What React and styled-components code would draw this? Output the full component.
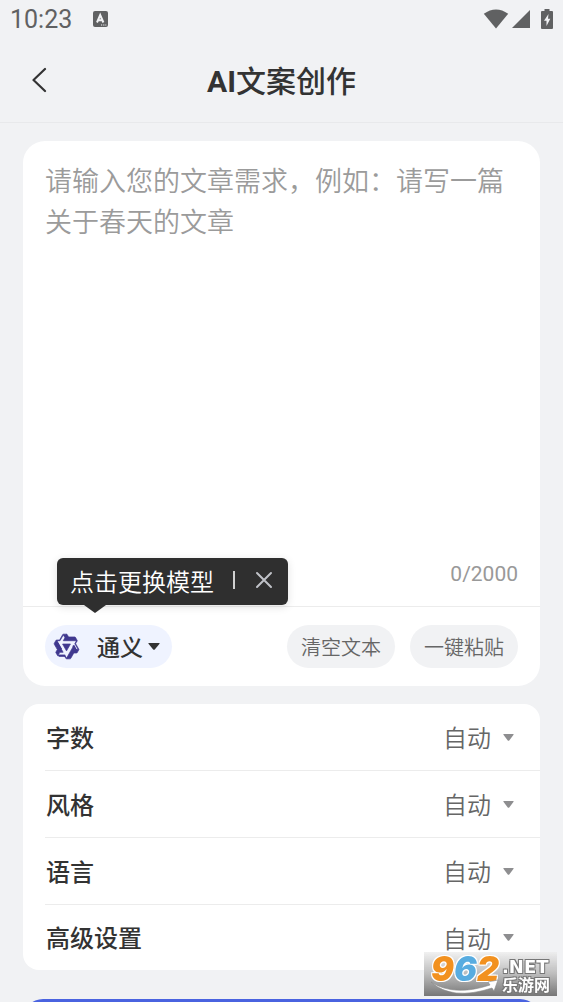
import React, { useState } from "react";
import styled, { createGlobalStyle } from "styled-components";

const GlobalStyle = createGlobalStyle`
  * {
    box-sizing: border-box;
  }
  body {
    margin: 0;
    background: #f1f2f4;
    color: #333333;
    font-family: Roboto, "Noto Sans CJK SC", sans-serif;
  }
  button, select, textarea {
    margin: 0;
    padding: 0;
    border: 0;
    background: none;
    color: inherit;
    font: inherit;
  }
`;

const Page = styled.div`
  display: flex;
  flex-direction: column;
  height: 100vh;
  overflow: hidden;
`;

const StatusBar = styled.div`
  display: flex;
  align-items: center;
  flex-shrink: 0;
  height: 38px;
  padding: 0 10px;
  color: #606162;
`;

const Clock = styled.span`
  margin-right: 21px;
  padding-top: 2px;
  font-size: 25px;
  line-height: 38px;
`;

const StatusIcons = styled.div`
  display: flex;
  align-items: center;
  margin-left: auto;
`;

const Signal = styled.svg`
  margin: 0 11px 0 3px;
`;

const Header = styled.header`
  display: grid;
  grid-template-columns: 48px 1fr 48px;
  align-items: center;
  flex-shrink: 0;
  height: 85px;
  padding: 0 16px;
  border-bottom: 1px solid #e8e9eb;
`;

const BackButton = styled.button`
  display: flex;
  align-items: center;
  justify-content: center;
  height: 48px;
`;

const Title = styled.h1`
  margin: 0;
  padding-bottom: 2px;
  font-size: 30px;
  font-weight: 500;
  text-align: center;
  strong {
    font-weight: 700;
  }
`;

const Main = styled.main`
  display: flex;
  flex-direction: column;
  flex: 1;
  gap: 18px;
  min-height: 0;
  padding: 18px 23px;
  overflow-y: auto;
  scrollbar-width: none;
`;

const Card = styled.section`
  flex-shrink: 0;
  border-radius: ${(props) => props.$radius};
  background: #ffffff;
`;

const Prompt = styled.textarea`
  display: block;
  width: 100%;
  padding: 21px 22px 31px;
  outline: none;
  resize: none;
  font-size: 27px;
  font-weight: 350;
  line-height: 41px;
  scrollbar-width: none;
  &::placeholder {
    color: #9b9b9b;
    opacity: 1;
  }
`;

const Counter = styled.div`
  padding: 0 22px 19px;
  color: #999999;
  font-size: 21px;
  line-height: 25px;
  text-align: right;
`;

const Toolbar = styled.div`
  display: flex;
  align-items: center;
  gap: 15px;
  height: 80px;
  padding: 0 22px;
  border-top: 1px solid #ececec;
`;

const ModelPicker = styled.div`
  position: relative;
  margin-right: auto;
`;

const ModelPill = styled.label`
  display: flex;
  align-items: center;
  height: 43px;
  padding: 0 12px 0 8px;
  border-radius: 22px;
  background: #eff3ff;
`;

const ModelSelect = styled.select`
  margin: 0 5px 0 17px;
  padding-top: 4px;
  appearance: none;
  outline: none;
  font-size: 23px;
  font-weight: 500;
`;

const Tooltip = styled.div`
  position: absolute;
  bottom: calc(100% + 20px);
  left: 12px;
  display: flex;
  align-items: center;
  height: 47px;
  padding: 0 15px 3px 13px;
  border-radius: 6px;
  background: #2f2f2f;
  box-shadow: 0 2px 8px rgba(0, 0, 0, 0.12);
  color: #ffffff;
  font-size: 24px;
  font-weight: 350;
  white-space: nowrap;
  &::after {
    content: "";
    position: absolute;
    top: 100%;
    left: 27px;
    border: 11px solid transparent;
    border-top: 8px solid #2f2f2f;
    border-bottom: 0;
  }
`;

const TooltipLine = styled.span`
  width: 2px;
  height: 18px;
  margin: 0 20px 0 19px;
  background: #d0d0d0;
`;

const CloseButton = styled.button`
  display: flex;
`;

const PillButton = styled.button`
  height: 43px;
  padding: 0 14px;
  border-radius: 22px;
  background: #f1f2f4;
  color: #666666;
  font-size: 20px;
  font-weight: 350;
  white-space: nowrap;
`;

const Option = styled.div`
  display: flex;
  align-items: center;
  height: 67px;
  margin-left: 22px;
  padding-right: 26px;
  border-bottom: 1px solid #ececec;
  &:last-child {
    height: 65px;
    border-bottom: 0;
  }
`;

const OptionLabel = styled.label`
  flex: 1;
  padding: 0 0 2px 1px;
  font-size: 24px;
  font-weight: 500;
`;

const OptionSelect = styled.select`
  margin-right: 12px;
  padding-top: 4px;
  appearance: none;
  outline: none;
  color: #666666;
  font-size: 24px;
  font-weight: 350;
`;

const SubmitButton = styled.button`
  flex-shrink: 0;
  height: 66px;
  margin-top: 11px;
  border-radius: 20px;
  background: #4a63e0;
`;

const Watermark = styled.div`
  position: fixed;
  right: 6px;
  bottom: 6px;
  display: flex;
  width: 133px;
  height: 44px;
  padding: 1px 0 0 7px;
  background: linear-gradient(rgba(235, 235, 235, 0.7), #bcbcbc 50%, #777777);
  font-family: "DejaVu Sans", "Noto Sans CJK SC", sans-serif;
  font-weight: 700;
  pointer-events: none;
`;

const Swoosh = styled.svg`
  position: absolute;
  left: 0;
  bottom: 0;
`;

const Digit = styled.span`
  width: 23px;
  color: ${(props) => props.$color};
  font-family: Inter, sans-serif;
  font-size: 34px;
  font-style: italic;
  font-weight: 900;
  line-height: 32px;
  text-shadow: 1px 1px 0 #ffffff, -1px -1px 0 #ffffff, 1px -1px 0 #ffffff, -1px 1px 0 #ffffff;
`;

const Domain = styled.div`
  display: flex;
  flex-direction: column;
  margin-left: 2px;
  padding-top: 4px;
  color: #ffffff;
  text-shadow: 1px 1px 0 #777777, -1px -1px 0 #777777, 1px -1px 0 #777777, -1px 1px 0 #777777;
`;

const DomainTop = styled.span`
  font-size: 18px;
  line-height: 19px;
`;

const DomainName = styled.span`
  font-size: 16px;
  line-height: 19px;
`;

const OPTIONS = [
  { id: "length", label: "字数" },
  { id: "style", label: "风格" },
  { id: "language", label: "语言" },
  { id: "advanced", label: "高级设置" },
];

function Arrow({ width, height, color }) {
  return (
    <svg width={width} height={height} viewBox="0 0 12 7" preserveAspectRatio="none" aria-hidden="true">
      <path d="M1 0h10q1 0 .5.8L6.8 6.4q-.8.9-1.6 0L.5.8Q0 0 1 0z" fill={color} />
    </svg>
  );
}

function ModelLogo() {
  return (
    <svg width="27" height="27" viewBox="0 0 24 24" aria-hidden="true">
      <path
        fill="#40388f"
        stroke="#40388f"
        strokeWidth="0.6"
        d="M12.604 1.34c.393.69.784 1.382 1.174 2.075a.18.18 0 00.157.091h5.552c.174 0 .322.11.446.327l1.454 2.57c.19.337.24.478.024.837-.26.43-.513.864-.76 1.3l-.367.658c-.106.196-.223.28-.04.512l2.652 4.637c.172.301.111.494-.043.77-.437.785-.882 1.564-1.335 2.34-.159.272-.352.375-.68.37-.777-.016-1.552-.01-2.327.016a.099.099 0 00-.081.05 575.097 575.097 0 01-2.705 4.74c-.169.293-.38.363-.725.364-.997.003-2.002.004-3.017.002a.537.537 0 01-.465-.271l-1.335-2.323a.09.09 0 00-.083-.049H4.982c-.285.03-.553-.001-.805-.092l-1.603-2.77a.543.543 0 01-.002-.54l1.207-2.12a.198.198 0 000-.197 550.951 550.951 0 01-1.875-3.272l-.79-1.395c-.16-.31-.173-.496.095-.965.465-.813.927-1.625 1.387-2.436.132-.234.304-.334.584-.335a338.3 338.3 0 012.589-.001.124.124 0 00.107-.063l2.806-4.895a.488.488 0 01.422-.246c.524-.001 1.053 0 1.583-.006L11.704 1c.341-.003.724.032.9.34zm-3.432.403a.06.06 0 00-.052.03L6.254 6.788a.157.157 0 01-.135.078H3.253c-.056 0-.07.025-.041.074l5.81 10.156c.025.042.013.062-.034.063l-2.795.015a.218.218 0 00-.2.116l-1.32 2.31c-.044.078-.021.118.068.118l5.716.008c.046 0 .08.02.104.061l1.403 2.454c.046.081.092.082.139 0l5.006-8.76.783-1.382a.055.055 0 01.096 0l1.424 2.53a.122.122 0 00.107.062l2.763-.02a.04.04 0 00.035-.02.041.041 0 000-.04l-2.9-5.086a.108.108 0 010-.113l.293-.507 1.12-1.977c.024-.041.012-.062-.035-.062H9.2c-.059 0-.073-.026-.043-.077l1.434-2.505a.107.107 0 000-.114L9.225 1.774a.06.06 0 00-.053-.031zm6.29 8.02c.046 0 .058.02.034.06l-.832 1.465-2.613 4.585a.056.056 0 01-.05.029.058.058 0 01-.05-.029L8.498 9.841c-.02-.034-.01-.052.028-.054l.216-.012 6.722-.012z"
      />
      <path
        d="M3.200 7.500L7.300 14.600M5.200 20.300H10.900M20.900 16L18 11"
        fill="none"
        stroke="#40388f"
        strokeWidth="1.800"
      />
    </svg>
  );
}

function SiteMark() {
  return (
    <Watermark>
      <Swoosh width="80" height="18" viewBox="0 0 80 18" aria-hidden="true">
        <path d="M7 4Q30 19 66 7L64 4L74 2L70 13L68 10Q28 23 7 4z" fill="#ffffff" stroke="#888888" strokeWidth="0.6" />
      </Swoosh>
      <Digit $color="#f2911f">9</Digit>
      <Digit $color="#58ace0">6</Digit>
      <Digit $color="#f2911f">2</Digit>
      <Domain>
        <DomainTop>.NET</DomainTop>
        <DomainName>乐游网</DomainName>
      </Domain>
    </Watermark>
  );
}

function App() {
  const [text, setText] = useState("");
  const [showTip, setShowTip] = useState(true);

  return (
    <Page>
      <GlobalStyle />
      <StatusBar>
        <Clock>10:23</Clock>
        <svg width="15" height="16" viewBox="0 0 15 16" aria-hidden="true">
          <rect width="15" height="16" rx="2" fill="currentColor" />
          <path d="M4 11.500L7.200 4L10.400 11.500M5.200 9.200H9.200" fill="none" stroke="#f1f2f4" strokeWidth="2" />
          <path d="M8 14h1.200M10.200 14h1.200M12.300 14h1" stroke="#f1f2f4" strokeWidth="1" />
        </svg>
        <StatusIcons>
          <svg width="26" height="20" viewBox="0 0 26 20" aria-hidden="true">
            <path d="M13 19.500L.8 4.800Q13-4 25.200 4.800z" fill="currentColor" />
          </svg>
          <Signal width="18" height="18" viewBox="0 0 18 18" aria-hidden="true">
            <path d="M0 18L18 0V18z" fill="currentColor" />
          </Signal>
          <svg width="12" height="20" viewBox="0 0 12 20" aria-hidden="true">
            <path d="M3.500 0h5v2H11q1 0 1 1v16q0 1-1 1H1q-1 0-1-1V3q0-1 1-1h2.500z" fill="currentColor" />
            <path d="M7.500 5L3 11.800h2.500V17L9.300 9.800H7z" fill="#f1f2f4" />
          </svg>
        </StatusIcons>
      </StatusBar>

      <Header>
        <BackButton type="button" aria-label="返回">
          <svg width="16" height="26" viewBox="0 0 16 26" fill="none" aria-hidden="true">
            <path d="M13 2L1.500 13L13 24" stroke="#333333" strokeWidth="2.200" strokeLinecap="round" strokeLinejoin="round" />
          </svg>
        </BackButton>
        <Title>
          <strong>AI</strong>文案创作
        </Title>
      </Header>

      <Main>
        <Card $radius="22px">
          <Prompt
            rows={9}
            maxLength={2000}
            aria-label="文章需求"
            placeholder="请输入您的文章需求，例如：请写一篇关于春天的文章"
            value={text}
            onChange={(e) => setText(e.target.value)}
          />
          <Counter>{text.length}/2000</Counter>
          <Toolbar>
            <ModelPicker>
              <ModelPill>
                <ModelLogo />
                <ModelSelect aria-label="模型">
                  <option>通义</option>
                </ModelSelect>
                <Arrow width={12} height={7} color="#333333" />
              </ModelPill>
              {showTip && (
                <Tooltip role="tooltip">
                  点击更换模型
                  <TooltipLine />
                  <CloseButton type="button" aria-label="关闭" onClick={() => setShowTip(false)}>
                    <svg width="18" height="18" viewBox="0 0 18 18" aria-hidden="true">
                      <path d="M2 2L16 16M16 2L2 16" stroke="#c0c2c8" strokeWidth="2" strokeLinecap="round" />
                    </svg>
                  </CloseButton>
                </Tooltip>
              )}
            </ModelPicker>
            <PillButton type="button" onClick={() => setText("")}>清空文本</PillButton>
            <PillButton type="button">一键粘贴</PillButton>
          </Toolbar>
        </Card>

        <Card $radius="16px">
          {OPTIONS.map((option) => (
            <Option key={option.id}>
              <OptionLabel htmlFor={option.id}>{option.label}</OptionLabel>
              <OptionSelect id={option.id}>
                <option>自动</option>
              </OptionSelect>
              <Arrow width={11} height={7} color="#8e8e90" />
            </Option>
          ))}
        </Card>

        <SubmitButton type="button" aria-label="开始创作" />
      </Main>
      <SiteMark />
    </Page>
  );
}

export default App;
